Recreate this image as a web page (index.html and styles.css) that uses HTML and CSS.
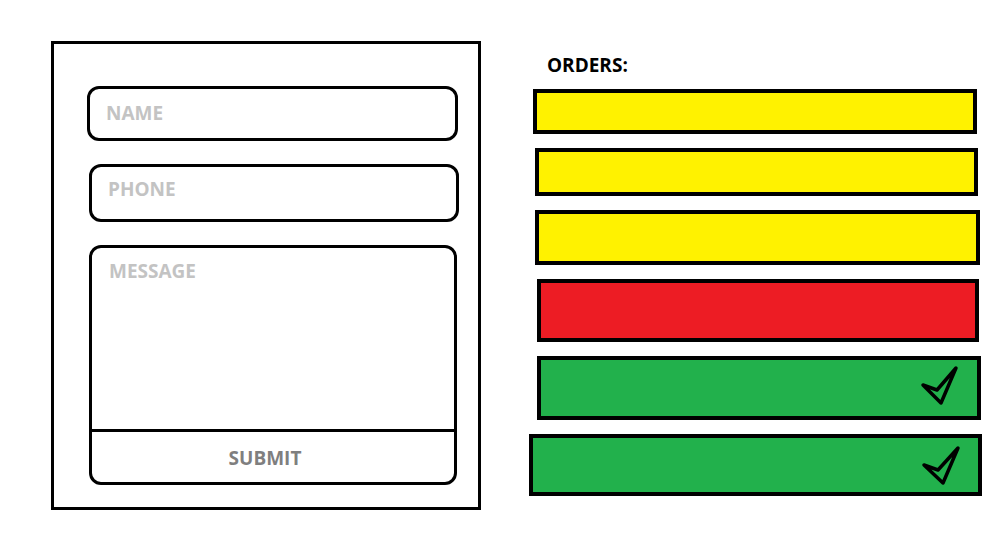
FILE: index.html
```html
<!DOCTYPE html>
<html lang="en">
<head>
    <meta charset="UTF-8">
    <meta name="viewport" content="width=device-width, initial-scale=1.0">
    <title>orders</title>
    <link rel="stylesheet" href="styles.css">
</head>
<body>
    <div class="page">
        <!-- Contact form -->
        <div class="form-card">
            <div class="field field-name">
                <span class="placeholder">NAME</span>
            </div>
            <div class="field field-phone">
                <span class="placeholder">PHONE</span>
            </div>
            <div class="message-box">
                <div class="message-body">
                    <span class="placeholder">MESSAGE</span>
                </div>
                <div class="submit">SUBMIT</div>
            </div>
        </div>

        <!-- Orders list -->
        <div class="orders">
            <h2 class="orders-title">ORDERS:</h2>
            <div class="order-list">
                <div class="order pending"></div>
                <div class="order pending"></div>
                <div class="order pending"></div>
                <div class="order failed"></div>
                <div class="order done">
                    <svg class="check" width="42" height="44" viewBox="0 0 42 44">
                        <polygon points="5,22 19,27 38,5 23,40" />
                    </svg>
                </div>
                <div class="order done">
                    <svg class="check" width="42" height="44" viewBox="0 0 42 44">
                        <polygon points="5,22 19,27 39,5 24,40" />
                    </svg>
                </div>
            </div>
        </div>
    </div>
</body>
</html>
```

FILE: styles.css
```css
* {
    margin: 0;
    padding: 0;
    box-sizing: border-box;
}
body {
    font-family: 'Open Sans', 'Liberation Sans', sans-serif;
    background-color: #fff;
    color: #000;
}
.page {
    display: flex;
    align-items: flex-start;
    padding: 41px 0 0 51px;
}
.form-card {
    width: 430px;
    height: 469px;
    border: 3px solid #000;
    padding: 42px 0 0 33px;
    display: flex;
    flex-direction: column;
    gap: 23px;
}
.field {
    width: 371px;
    border: 3px solid #000;
    border-radius: 12px;
    padding: 12px 0 0 16px;
}
.field-name {
    height: 55px;
}
.field-phone {
    height: 58px;
    margin-left: 2px;
    width: 370px;
    padding-top: 10px;
}
.placeholder {
    font-size: 19px;
    font-weight: 700;
    line-height: 24px;
    color: #c3c3c3;
}
.message-box {
    width: 368px;
    height: 240px;
    margin-left: 2px;
    border: 3px solid #000;
    border-radius: 12px;
    display: flex;
    flex-direction: column;
}
.message-body {
    flex: 1;
    padding: 11px 0 0 17px;
}
.submit {
    height: 53px;
    border-top: 3px solid #000;
    display: flex;
    align-items: center;
    justify-content: center;
    font-size: 19px;
    font-weight: 700;
    color: #7f7f7f;
    padding: 1px 16px 0 0;
}
.orders {
    width: 453px;
    margin-left: 48px;
}
.orders-title {
    font-size: 19px;
    font-weight: 700;
    line-height: 24px;
    margin-top: 12px;
    padding-left: 18px;
}
.order-list {
    display: flex;
    flex-direction: column;
    gap: 14px;
    margin-top: 12px;
}
.order {
    border: 4px solid #000;
    display: flex;
    align-items: center;
    justify-content: flex-end;
    padding-right: 17px;
}
.pending {
    background-color: #fff200;
}
.failed {
    background-color: #ed1c24;
}
.done {
    background-color: #22b14c;
}
.order:nth-child(1) {
    height: 45px;
    margin: 0 5px 0 4px;
}
.order:nth-child(2) {
    height: 48px;
    margin: 0 4px 0 6px;
}
.order:nth-child(3) {
    height: 55px;
    margin: 0 2px 0 6px;
}
.order:nth-child(4) {
    height: 63px;
    margin: 0 3px 0 8px;
}
.order:nth-child(5) {
    height: 64px;
    margin: 0 1px 0 8px;
}
.order:nth-child(6) {
    height: 62px;
}
.check {
    display: block;
    margin-bottom: 6px;
}
.check polygon {
    fill: none;
    stroke: #000;
    stroke-width: 3.5;
    stroke-linejoin: round;
}
.order:nth-child(6) .check {
    margin-bottom: 0;
}
```
